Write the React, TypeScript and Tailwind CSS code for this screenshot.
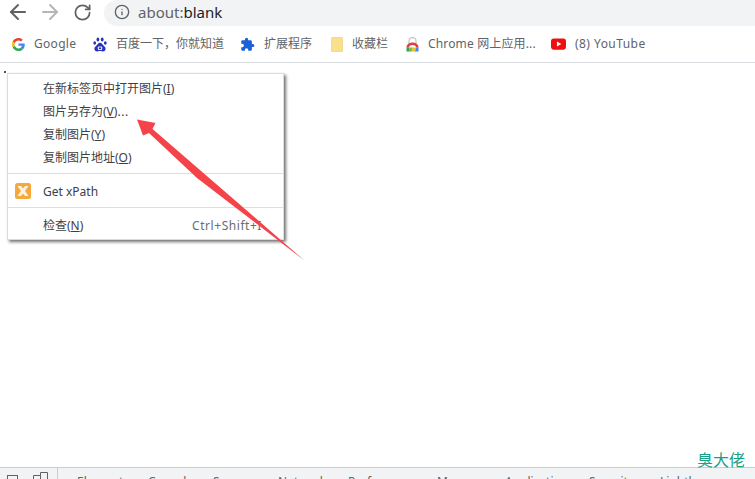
import { ArrowLeft, ArrowRight, RotateCw, Info } from "lucide-react";

const font = "font-['Noto_Sans','Noto_Sans_CJK_SC',sans-serif]";

function GoogleIcon() {
  return (
    <svg width="13" height="13" viewBox="0 0 48 48">
      <path fill="#EA4335" d="M24 9.500c3.500 0 6.700 1.300 9.100 3.500l6.800-6.800C35.800 2.400 30.300 0 24 0 14.600 0 6.500 5.400 2.600 13.200l7.900 6.100C12.400 13.700 17.700 9.500 24 9.500z" />
      <path fill="#4285F4" d="M47 24.500c0-1.600-.1-3.100-.4-4.500H24v9h12.900c-.6 3-2.200 5.500-4.700 7.200l7.700 6C44.400 37.900 47 31.800 47 24.500z" />
      <path fill="#FBBC05" d="M10.500 28.700c-.5-1.400-.8-3-.8-4.700s.3-3.200.8-4.700l-7.900-6.100C.9 16.500 0 20.100 0 24s.9 7.500 2.600 10.800l7.900-6.100z" />
      <path fill="#34A853" d="M24 48c6.500 0 11.900-2.100 15.900-5.800l-7.700-6c-2.200 1.400-4.900 2.300-8.200 2.300-6.300 0-11.600-4.200-13.500-9.800l-7.900 6.100C6.500 42.600 14.600 48 24 48z" />
    </svg>
  );
}

function BaiduIcon() {
  return (
    <svg width="14" height="15" viewBox="0 0 14 15" fill="#2932b8">
      <ellipse cx="4.900" cy="2.500" rx="1.400" ry="2" />
      <ellipse cx="9.200" cy="2.500" rx="1.400" ry="2" />
      <ellipse cx="1.700" cy="6" rx="1.400" ry="1.800" />
      <ellipse cx="12.300" cy="6" rx="1.400" ry="1.800" />
      <path d="M7 5.800c-2 0-2.500 2-4 3.200-1.500 1.200-1.800 2.400-1.500 3.500C1.900 14 3.200 14.600 4.500 14.400c1-.1 1.700-.3 2.500-.3s1.500.2 2.500.3c1.300.2 2.600-.4 3-1.900.3-1.100 0-2.300-1.500-3.500C9.500 7.800 9 5.800 7 5.800z" />
      <rect x="4.800" y="9.600" width="4.400" height="3.400" rx="1" fill="#fff" />
      <rect x="5.800" y="10.400" width="2.400" height="1.800" fill="#2932b8" />
    </svg>
  );
}

function PuzzleIcon() {
  return (
    <svg width="15" height="15" viewBox="0 0 24 24" fill="#1a62d6">
      <path d="M20.500 11H19V7a2 2 0 0 0-2-2h-4V3.500a2.500 2.500 0 0 0-5 0V5H4a2 2 0 0 0-2 2v3.800h1.500a2.700 2.700 0 0 1 0 5.400H2V20a2 2 0 0 0 2 2h3.800v-1.500a2.700 2.700 0 0 1 5.400 0V22H17a2 2 0 0 0 2-2v-4h1.500a2.500 2.500 0 0 0 0-5z" />
    </svg>
  );
}

function FolderIcon() {
  return <div className="h-[15px] w-[12px] rounded-[1px] border border-[#eedb9c] bg-[#fbe08c]" />;
}

function WebStoreIcon() {
  return (
    <svg width="13" height="15" viewBox="0 0 13 15">
      <path d="M3 6.500V4a3.500 3.500 0 0 1 7 0v2.500" fill="none" stroke="#c4c7cc" strokeWidth="1.300" />
      <path d="M0.500 10a6 4.500 0 0 1 12 0l-2.500.5a3.500 2.500 0 0 0-7 0z" fill="#dc4036" />
      <path d="M0.500 10L3 10.500 4 14.500H0.500z" fill="#38a04f" />
      <path d="M3 10.500h3.500v4H4z" fill="#7db94a" />
      <path d="M6.500 10.500H10l-1 4H6.500z" fill="#f2bd1d" />
      <path d="M10 10.500l2.500-.5v4.500H9z" fill="#4285f4" />
    </svg>
  );
}

function YoutubeIcon() {
  return (
    <svg width="16" height="12" viewBox="0 0 16 12">
      <rect width="16" height="12" rx="3" fill="#ee0f0f" />
      <path d="M6.300 3.300v5.400L11 6z" fill="#fff" />
    </svg>
  );
}

function Bookmark({ icon, label, className }: { icon: React.ReactNode; label: string; className: string }) {
  return (
    <div className={`flex shrink-0 items-center ${className}`}>
      <div className="flex w-[15px] shrink-0 justify-center">{icon}</div>
      <span className="whitespace-nowrap text-[12px] text-[#5f6368]">{label}</span>
    </div>
  );
}

function MenuItem({ label, shortcut }: { label: React.ReactNode; shortcut?: string }) {
  return (
    <div className="flex h-[23px] items-center justify-between pl-[35px] pr-[21px] text-[12px] text-[#3f4043]">
      <span>{label}</span>
      {shortcut && <span className="tracking-[0.55px] text-[#6a6c70]">{shortcut}</span>}
    </div>
  );
}

const tabs = [
  { name: "Elements", w: "w-[71px]" },
  { name: "Console", w: "w-[65px]" },
  { name: "Sources", w: "w-[65px]" },
  { name: "Network", w: "w-[70px]" },
  { name: "Performance", w: "w-[89px]" },
  { name: "Memory", w: "w-[68px]" },
  { name: "Application", w: "w-[84px]" },
  { name: "Security", w: "w-[71px]" },
  { name: "Lighthouse", w: "w-[80px]" },
];

export default function App() {
  return (
    <div className={`relative flex h-[479px] w-[755px] flex-col overflow-hidden bg-white ${font}`}>
      {/* toolbar */}
      <div className="flex h-[27px] shrink-0 items-start">
        <div className="flex h-[24px] w-[104px] shrink-0 items-center pl-[6px] text-[#5f6368]">
          <ArrowLeft size={24} strokeWidth={2} className="shrink-0" />
          <ArrowRight size={24} strokeWidth={2} className="ml-[8px] shrink-0 text-[#b4b6b9]" />
          <RotateCw size={19} strokeWidth={2.2} className="ml-[11px] shrink-0" />
        </div>
        <div className="flex h-[26px] flex-1 items-center rounded-l-[13px] bg-[#f1f3f4] pb-[2px] pl-[10px]">
          <Info size={16} strokeWidth={2} className="shrink-0 text-[#5f6368]" />
          <span className="ml-[8px] text-[15px] text-[#5f6368]">
            about:<span className="text-[#202124]">blank</span>
          </span>
        </div>
      </div>

      {/* bookmarks */}
      <div className="flex h-[36px] shrink-0 items-center border-b border-[#d8dbe0] pb-[1px] pl-[11px]">
        <Bookmark icon={<GoogleIcon />} label="Google" className="w-[81px] gap-[8px] tracking-[0.3px]" />
        <Bookmark icon={<BaiduIcon />} label="百度一下，你就知道" className="w-[148px] gap-[9px]" />
        <Bookmark icon={<PuzzleIcon />} label="扩展程序" className="w-[89px] gap-[9px]" />
        <Bookmark icon={<FolderIcon />} label="收藏栏" className="w-[76px] gap-[8px]" />
        <Bookmark icon={<WebStoreIcon />} label="Chrome 网上应用..." className="w-[146px] gap-[8px] tracking-[0.15px]" />
        <Bookmark icon={<YoutubeIcon />} label="(8) YouTube" className="w-[100px] gap-[9px] tracking-[0.45px]" />
      </div>

      {/* page */}
      <div className="flex-1" />

      {/* devtools strip, cut off by the window */}
      <div className="flex h-[12px] shrink-0 items-start overflow-hidden border-t border-[#cbcdd0] bg-[#f1f3f4]">
        <div className="flex h-[12px] w-[77px] shrink-0 items-start pl-[7px]">
          <div className="mt-[7px] h-[10px] w-[11px] border border-[#5f6368]" />
          <svg width="15" height="12" viewBox="0 0 15 12" fill="none" stroke="#5f6368" className="ml-[15px] mt-[4px] shrink-0">
            <path d="M0.500 12V3.500H7.500M7.500 12V0.500H14.500V12" />
          </svg>
          <div className="ml-[9px] h-[12px] w-px bg-[#cbcdd0]" />
        </div>
        {tabs.map((t) => (
          <span key={t.name} className={`${t.w} shrink-0 pt-[6px] text-[12px] leading-[16px] text-[#5f6368]`}>
            {t.name}
          </span>
        ))}
      </div>

      {/* context menu */}
      <div className="absolute left-[7px] top-[73px] h-[167px] w-[277px] border border-[#dcdcdc] bg-white pt-[3px] shadow-[2px_2px_3px_rgba(0,0,0,0.55)]">
        <MenuItem label={<>在新标签页中打开图片(<u>I</u>)</>} />
        <MenuItem label={<>图片另存为(<u>V</u>)<span className="tracking-[0.6px]">...</span></>} />
        <MenuItem label={<>复制图片(<u>Y</u>)</>} />
        <MenuItem label={<>复制图片地址(<u>O</u>)</>} />
        <div className="mt-[4px] h-px bg-[#dedede]" />
        <div className="relative mt-[6px]">
          <MenuItem label="Get xPath" />
          <svg width="16" height="16" viewBox="0 0 16 16" className="absolute left-[7px] top-[3px]">
            <rect width="16" height="16" rx="2.500" fill="#f5a93c" />
            <path d="M2.500 3L6 3 8 5.500 10 3h3.500L10 8l3.500 5H10L8 10.500 6 13H2.500L6 8z" fill="#fdf3e3" />
          </svg>
        </div>
        <div className="mt-[4px] h-px bg-[#dedede]" />
        <div className="mt-[6px]">
          <MenuItem label={<>检查(<u>N</u>)</>} shortcut="Ctrl+Shift+I" />
        </div>
      </div>

      {/* annotation arrow */}
      <svg width="755" height="479" viewBox="0 0 755 479" className="pointer-events-none absolute left-0 top-0">
        <path d="M137 119.500L155.500 123L152.500 129L305 261L197 178L149 133L143 135.500z" fill="#f5434a" />
      </svg>

      {/* watermark */}
      <span className="absolute left-[697px] top-[450px] text-[16px] leading-[20px] text-[#1aa086]">臭大佬</span>

      {/* cursor speck */}
      <div className="absolute left-[4px] top-[71px] h-[2px] w-[2px] bg-[#555]" />
    </div>
  );
}
